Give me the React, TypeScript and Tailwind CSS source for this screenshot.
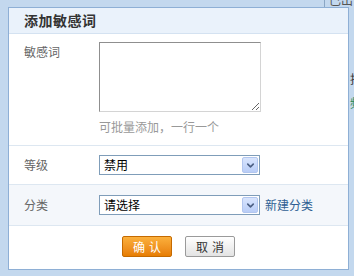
import { ChevronDown } from "lucide-react";

const cjk = "font-['Noto_Sans_CJK_SC','Noto_Sans',sans-serif]";

function FakeSelect({ value }: { value: string }) {
  return (
    <div className="w-[161px] h-[20px] border border-[#7f9db9] bg-white flex items-center justify-between pl-[4px] pr-[1px]">
      <span className="text-[12px] leading-[16px] text-black">{value}</span>
      <span className="w-[16px] h-[16px] bg-gradient-to-b from-[#d9e5fd] to-[#b9cdf7] border border-[#b2c6ef] rounded-[2px] flex items-center justify-center">
        <ChevronDown size={11} strokeWidth={3.5} color="#4d6185" />
      </span>
    </div>
  );
}

export default function App() {
  return (
    <div className={`${cjk} relative w-[354px] h-[276px] overflow-hidden bg-[#c3d8ee] flex pt-[7px] pl-[8px]`}>
      {/* bits of the page behind the dialog */}
      <span className="absolute -top-[9px] left-[329px] text-[12px] text-[#555]">已出</span>
      <span className="absolute top-0 left-[324px] w-px h-[7px] bg-[#8aa6c4]" />

      <div className="w-[341px] h-[263px] border border-[#8eafd5] bg-white flex flex-col shrink-0">
        <header className="h-[26px] bg-[#eaf2fb] border-b border-[#d4e2f1] pl-[15px] flex items-center">
          <h2 className="text-[14px] font-bold text-[#333] tracking-[0.5px]">添加敏感词</h2>
        </header>

        <section className="flex pl-[15px] pt-[8px] pb-[10px] border-b border-[#dde7f1]">
          <label className="w-[75px] pt-[2px] text-[12px] leading-[16px] text-[#666]">敏感词</label>
          <div className="flex flex-col gap-[7px]">
            <textarea className="w-[162px] h-[70px] border border-t-[#8f8f8f] border-l-[#8f8f8f] border-r-[#d4d4d4] border-b-[#d4d4d4] bg-white resize" />
            <span className="text-[12px] leading-[16px] text-[#999]">可批量添加，一行一个</span>
          </div>
        </section>

        <section className="flex items-center pl-[15px] h-[39px] border-b border-[#dde7f1]">
          <label className="w-[75px] text-[12px] leading-[16px] text-[#666]">等级</label>
          <FakeSelect value="禁用" />
        </section>

        <section className="flex items-center pl-[15px] h-[41px] bg-[#f4f7fb] border-b border-[#dde7f1]">
          <label className="w-[75px] text-[12px] leading-[16px] text-[#666]">分类</label>
          <FakeSelect value="请选择" />
          <a className="ml-[5px] text-[12px] leading-[16px] text-[#2f5f93]">新建分类</a>
        </section>

        <footer className="flex justify-center gap-[13px] pt-[10px]">
          <button
            type="button"
            className="w-[50px] h-[21px] rounded-[2px] border border-[#c56a00] bg-gradient-to-b from-[#fbb03b] to-[#e77d00] text-white text-[12px] leading-[16px] tracking-[4px] pl-[4px]"
          >
            确认
          </button>
          <button
            type="button"
            className="w-[50px] h-[21px] rounded-[2px] border border-[#9a9a9a] bg-gradient-to-b from-white to-[#e3e3e3] text-[#333] text-[12px] leading-[16px] tracking-[4px] pl-[4px]"
          >
            取消
          </button>
        </footer>
      </div>

      <div className="flex-1 flex flex-col pt-[64px] pl-[1px] text-[12px] leading-[16px] overflow-hidden">
        <span className="text-[#333]">拒</span>
        <span className="mt-[8px] text-[#2e8b57]">频</span>
      </div>
    </div>
  );
}
